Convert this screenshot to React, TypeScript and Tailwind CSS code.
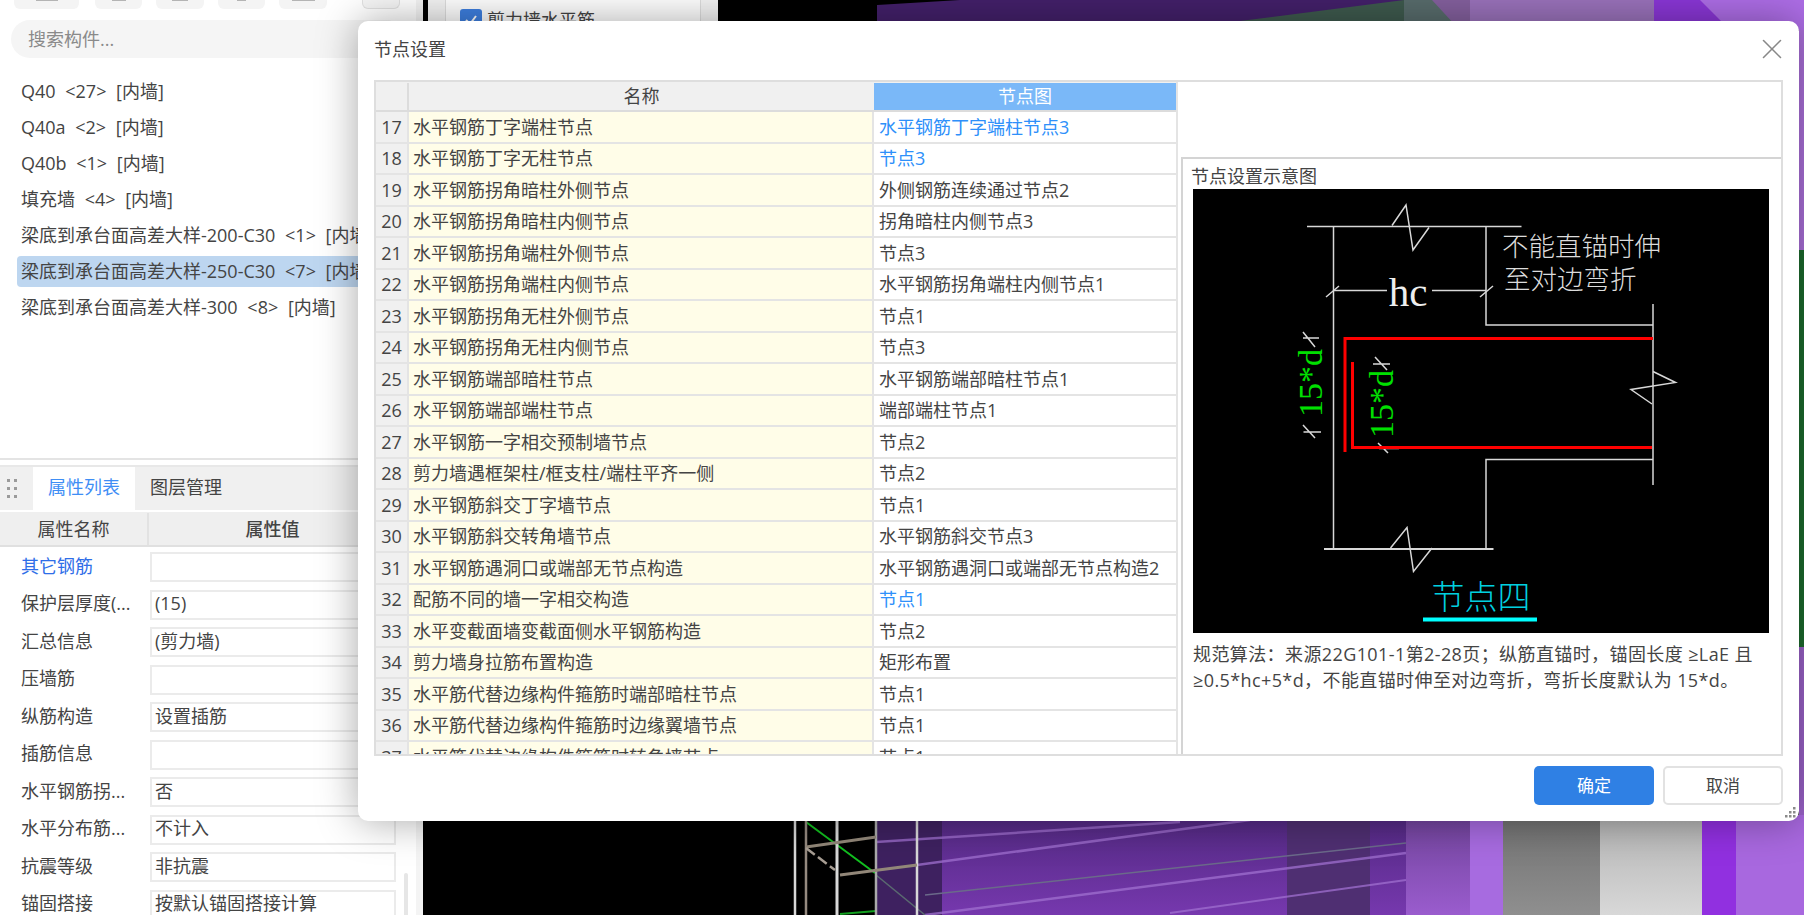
import { X } from "lucide-react";

const listItems = [
  "Q40 <27> [内墙]",
  "Q40a <2> [内墙]",
  "Q40b <1> [内墙]",
  "填充墙 <4> [内墙]",
  "梁底到承台面高差大样-200-C30 <1> [内墙]",
  "梁底到承台面高差大样-250-C30 <7> [内墙]",
  "梁底到承台面高差大样-300 <8> [内墙]",
];

const props: [string, string][] = [
  ["其它钢筋", ""],
  ["保护层厚度(...", "(15)"],
  ["汇总信息", "(剪力墙)"],
  ["压墙筋", ""],
  ["纵筋构造", "设置插筋"],
  ["插筋信息", ""],
  ["水平钢筋拐...", "否"],
  ["水平分布筋...", "不计入"],
  ["抗震等级", "非抗震"],
  ["锚固搭接", "按默认锚固搭接计算"],
];

// no, name, node, node is a link
const rows: [number, string, string, boolean?][] = [
  [17, "水平钢筋丁字端柱节点", "水平钢筋丁字端柱节点3", true],
  [18, "水平钢筋丁字无柱节点", "节点3", true],
  [19, "水平钢筋拐角暗柱外侧节点", "外侧钢筋连续通过节点2"],
  [20, "水平钢筋拐角暗柱内侧节点", "拐角暗柱内侧节点3"],
  [21, "水平钢筋拐角端柱外侧节点", "节点3"],
  [22, "水平钢筋拐角端柱内侧节点", "水平钢筋拐角端柱内侧节点1"],
  [23, "水平钢筋拐角无柱外侧节点", "节点1"],
  [24, "水平钢筋拐角无柱内侧节点", "节点3"],
  [25, "水平钢筋端部暗柱节点", "水平钢筋端部暗柱节点1"],
  [26, "水平钢筋端部端柱节点", "端部端柱节点1"],
  [27, "水平钢筋一字相交预制墙节点", "节点2"],
  [28, "剪力墙遇框架柱/框支柱/端柱平齐一侧", "节点2"],
  [29, "水平钢筋斜交丁字墙节点", "节点1"],
  [30, "水平钢筋斜交转角墙节点", "水平钢筋斜交节点3"],
  [31, "水平钢筋遇洞口或端部无节点构造", "水平钢筋遇洞口或端部无节点构造2"],
  [32, "配筋不同的墙一字相交构造", "节点1", true],
  [33, "水平变截面墙变截面侧水平钢筋构造", "节点2"],
  [34, "剪力墙身拉筋布置构造", "矩形布置"],
  [35, "水平筋代替边缘构件箍筋时端部暗柱节点", "节点1"],
  [36, "水平筋代替边缘构件箍筋时边缘翼墙节点", "节点1"],
  [37, "水平筋代替边缘构件箍筋时转角墙节点", "节点1"],
];

function Scene() {
  return (
    <svg className="block h-[915px] w-[1381px]" viewBox="423 0 1381 915">
      <defs>
        <linearGradient id="pur" x1="0" y1="822" x2="0" y2="915" gradientUnits="userSpaceOnUse">
          <stop offset="0" stopColor="#552a85" />
          <stop offset="1" stopColor="#7638ae" />
        </linearGradient>
        <linearGradient id="pur2" x1="0" y1="822" x2="0" y2="915" gradientUnits="userSpaceOnUse">
          <stop offset="0" stopColor="#74459f" />
          <stop offset="1" stopColor="#9a5cce" />
        </linearGradient>
        <linearGradient id="grey1" x1="0" y1="822" x2="0" y2="915" gradientUnits="userSpaceOnUse">
          <stop offset="0" stopColor="#737373" />
          <stop offset="1" stopColor="#8f8f8f" />
        </linearGradient>
        <linearGradient id="grey2" x1="0" y1="822" x2="0" y2="915" gradientUnits="userSpaceOnUse">
          <stop offset="0" stopColor="#b5b5b5" />
          <stop offset="1" stopColor="#d8d8d8" />
        </linearGradient>
      </defs>
      <rect x="423" y="0" width="1381" height="915" fill="#000" />
      {/* top strip above the dialog */}
      <path d="M877 5 L960 0 L1404 0 L1404 30 L877 30 Z" fill="#43206a" />
      <path d="M1240 21 L1404 0 L1430 25 L1240 25 Z" fill="#3e5a4e" />
      <rect x="1404" y="0" width="66" height="30" fill="#84609e" />
      <path d="M1404 0 L1432 0 L1455 25 L1404 25 Z" fill="#4d6f5f" opacity="0.8" />
      <rect x="1470" y="0" width="184" height="30" fill="#9a72bb" />
      <rect x="1654" y="0" width="150" height="30" fill="#8a36d6" />
      <path d="M1700 0 L1804 0 L1804 30 L1730 30 Z" fill="#ad6de6" />
      {/* right edge */}
      <rect x="1799" y="30" width="5" height="220" fill="#ab70da" />
      <rect x="1799" y="250" width="5" height="397" fill="#1d6b2e" />
      <rect x="1799" y="647" width="5" height="180" fill="#9a62c8" />
      {/* bands below the dialog */}
      <rect x="876" y="815" width="66" height="100" fill="#3e2160" />
      <rect x="942" y="815" width="345" height="100" fill="url(#pur)" />
      <rect x="1287" y="815" width="83" height="100" fill="#4f2f72" />
      <rect x="1370" y="815" width="36" height="100" fill="url(#pur)" />
      <rect x="1406" y="815" width="64" height="100" fill="url(#pur2)" />
      <rect x="1470" y="815" width="33" height="100" fill="#a76be0" />
      <rect x="1503" y="815" width="97" height="100" fill="url(#grey1)" />
      <rect x="1600" y="815" width="102" height="100" fill="url(#grey2)" />
      <rect x="1702" y="815" width="34" height="100" fill="#9130e0" />
      <rect x="1736" y="815" width="68" height="100" fill="#a868df" />
      {/* faint beams on the purple */}
      <g stroke="#a070d0" strokeWidth="2.5" opacity="0.75" fill="none">
        <path d="M876 842 L1180 822" />
        <path d="M917 865 L1250 820" />
        <path d="M925 915 L1406 853" />
        <path d="M1170 913 L1406 880" strokeWidth="2" />
      </g>
      <path d="M925 895 L1406 843" stroke="#6b6a8a" strokeWidth="1.5" fill="none" />
      {/* scaffold */}
      <path d="M806 822 L875 873" stroke="#12c020" strokeWidth="2" fill="none" />
      <path d="M840 914 L876 911" stroke="#12a020" strokeWidth="2" fill="none" />
      <path d="M876 875 L925 915" stroke="#5a6a70" strokeWidth="1.5" fill="none" />
      <g stroke="#d8d8d8" strokeWidth="2.5" fill="none">
        <path d="M795 815 V915" />
        <path d="M837 815 V915" strokeWidth="3" />
        <path d="M876 815 V915" stroke="#aaa" />
        <path d="M917 815 V915" />
      </g>
      <path d="M806 815 V915" stroke="#958a80" strokeWidth="2.5" fill="none" />
      <g stroke="#928779" strokeWidth="3" fill="none">
        <path d="M806 847 L876 837" />
        <path d="M840 875 L917 865" />
      </g>
      <path d="M806 848 L835 870" stroke="#a89e94" strokeWidth="2.5" strokeDasharray="11 4" fill="none" />
    </svg>
  );
}

function NodeDiagram() {
  return (
    <svg className="block h-[444px] w-[576px] bg-black" viewBox="0 0 576 444">
      <g stroke="#d8d8d8" strokeWidth="1.5" fill="none">
        <path d="M114 37.5 H328.5" />
        <path d="M140.5 37 V360" />
        <path d="M293 37 V136 H460" />
        <path d="M460 115 V296" />
        <path d="M293 360 V270.5 H460" />
        <path d="M131 360 H300.5" strokeWidth="2" />
        <path d="M199 36.5 L213 16 L220 61 L236 38.5" />
        <path d="M197.5 359 L214 338.5 L220.5 382.5 L239 359" />
        <path d="M460 182.5 L482.5 193.5 L438 200.5 L459 215" />
        <path d="M140 101.5 H194 M239 101.5 H293" />
        <path d="M133 108 L146 97 M287 108 L300 97" />
        <path d="M110 143 L122 158 M110 149 H126" />
        <path d="M110 236 L122 249 M110.5 243 H128" />
        <path d="M182 168 L194 181 M180 175 H197" />
        <path d="M185 254 L195 264 M186 259.5 H206" />
      </g>
      <path d="M460 149.5 H152 V263" stroke="#f00" strokeWidth="3" fill="none" />
      <path d="M159.5 173 V258.5 H459" stroke="#f00" strokeWidth="3" fill="none" />
      <text x="215" y="117" fill="#eee" fontSize="41" textAnchor="middle" fontFamily="'Liberation Serif', serif">
        hc
      </text>
      <g fill="#dcdcdc" fontSize="26.5" fontFamily="'Noto Sans CJK SC', sans-serif" fontWeight="300">
        <text x="309" y="67">不能直锚时伸</text>
        <text x="311" y="100">至对边弯折</text>
      </g>
      <g fill="#00e000" fontSize="34" fontFamily="'Liberation Serif', serif" textAnchor="middle">
        <text transform="translate(129 194) rotate(-90)">15*d</text>
        <text transform="translate(200 215) rotate(-90)">15*d</text>
      </g>
      <text
        x="288"
        y="420"
        fill="#00d0e0"
        fontSize="33"
        textAnchor="middle"
        fontFamily="'Noto Sans CJK SC', sans-serif"
        fontWeight="300"
      >
        节点四
      </text>
      <rect x="230" y="428.5" width="114" height="4" fill="#0ff" />
    </svg>
  );
}

function ToolButton({ className, mark }: { className: string; mark: string }) {
  return (
    <div className={`h-[9px] rounded-b-md bg-[#f4f4f4] ${className}`}>
      <div className={`mx-auto h-px ${mark} bg-[#b4b4b4]`} />
    </div>
  );
}

function Sidebar() {
  return (
    <aside className="flex h-[915px] w-[423px] shrink-0 flex-col border-r-[7px] border-[#f4f4f4] bg-white">
      <div className="flex h-5 items-start pl-[14px]">
        <ToolButton className="w-[66px] border-r border-white" mark="w-[22px]" />
        <ToolButton className="ml-[15px] w-[47px]" mark="w-[14px]" />
        <ToolButton className="ml-[14px] w-[48px]" mark="w-[16px]" />
        <ToolButton className="ml-[14px] w-[47px]" mark="w-[9px]" />
        <ToolButton className="ml-[14px] w-[48px]" mark="w-[23px]" />
        <div className="ml-[35px] h-[9px] w-[38px] rounded-b-md border border-t-0 border-[#e2e2e2] bg-[#f6f6f6]" />
      </div>
      <div className="mx-[11px] flex h-[38px] items-center rounded-full bg-[#f5f5f5] pl-[17px] text-[#8a8a8a]">
        搜索构件...
      </div>
      <div className="mt-[18px] flex flex-1 flex-col gap-[5px]">
        {listItems.map((item, i) => (
          <div
            key={item}
            className={`mx-[17px] flex h-[31px] items-center overflow-hidden whitespace-nowrap rounded px-1 pb-[1px] [word-spacing:5px] ${
              i === 5 ? "bg-[#bdd6f0]" : ""
            }`}
          >
            {item}
          </div>
        ))}
      </div>
      <div className="h-[457px] border-t-2 border-[#e4e4e4]">
        <div className="mt-[5px] flex h-[45px] items-stretch border-t-2 border-[#e8e8e8] bg-[#f0f0f0]">
          <div className="flex w-[33px] items-center pl-[7px]">
            <svg width="10" height="20" viewBox="0 0 10 20" fill="#9a9a9a">
              <rect x="0" y="0" width="3" height="3" />
              <rect x="7" y="0" width="3" height="3" />
              <rect x="0" y="8" width="3" height="3" />
              <rect x="7" y="8" width="3" height="3" />
              <rect x="0" y="16" width="3" height="3" />
              <rect x="7" y="16" width="3" height="3" />
            </svg>
          </div>
          <div className="flex w-[102px] items-center justify-center bg-white pb-[2px] text-[#3f8ef5]">属性列表</div>
          <div className="flex w-[102px] items-center justify-center pb-[2px]">图层管理</div>
        </div>
        <div className="mt-[2px] flex h-[35px] border-b-2 border-[#e0e0e0] bg-[#efefef] pt-[1px]">
          <div className="flex w-[149px] items-center justify-center border-r-2 border-[#e2e2e2]">属性名称</div>
          <div className="flex w-[247px] items-center justify-center font-medium">属性值</div>
        </div>
        <div className="relative mt-[5px] flex flex-col gap-[7.5px]">
          {props.map(([label, value], i) => (
            <div key={label} className="flex h-[30px] items-center">
              <div className={`w-[150px] pb-[2px] pl-[21px] ${i === 0 ? "text-[#2f6ee8]" : ""}`}>{label}</div>
              <div className="flex h-full w-[246px] items-center border-2 border-[#ebebeb] pb-[2px] pl-[3px]">
                {value}
              </div>
            </div>
          ))}
          <div className="absolute left-[404px] top-[321px] h-[60px] w-1 rounded bg-[#e6e6e6]" />
        </div>
      </div>
    </aside>
  );
}

function NodeDialog() {
  return (
    <div className="absolute left-[358px] top-[21px] flex h-[800px] w-[1441px] flex-col rounded-[10px] bg-white shadow-[0_0_40px_rgba(0,0,0,0.35)]">
      <div className="flex h-[59px] shrink-0 items-center justify-between pl-4 pr-[10px] pb-[3px]">
        <span>节点设置</span>
        <X size={34} strokeWidth={1.1} className="text-[#888]" />
      </div>
      <div className="mx-4 flex h-[676px] overflow-hidden border-2 border-[#dedede]">
        <div className="w-[802px] shrink-0 overflow-hidden border-r-2 border-[#e4e4e4]">
          <div className="flex h-[30px] border-b-2 border-[#dcdcdc] bg-[#f0f0f0] pt-[1px]">
            <div className="w-[33px] border-r-2 border-[#dcdcdc]" />
            <div className="flex w-[465px] items-center justify-center">名称</div>
            <div className="flex flex-1 items-center justify-center bg-[#7ab8f8] text-white">节点图</div>
          </div>
          {rows.map(([no, name, node, link]) => (
            <div key={no} className="flex h-[31.5px] border-b-2 border-[#e4e4e4]">
              <div className="flex w-[33px] items-center justify-center border-r-2 border-[#e4e4e4] bg-[#f0f0f0] pt-[1px]">
                {no}
              </div>
              <div className="flex w-[465px] items-center border-r-2 border-[#e4e4e4] bg-[#fffde8] pl-[4px] pt-[1px]">
                {name}
              </div>
              <div className={`flex flex-1 items-center pl-[5px] pt-[1px] ${link ? "text-[#2e90fa]" : ""}`}>{node}</div>
            </div>
          ))}
        </div>
        <div className="flex flex-1 flex-col pl-[3px] pt-[75px]">
          <div className="flex h-full flex-col border-l-2 border-t-2 border-[#d4d4d4] pl-[10px]">
            <div className="-ml-[2px] flex h-[30px] items-center pt-[4px]">节点设置示意图</div>
            <NodeDiagram />
            <p className="mt-[8px] w-[576px] leading-[26px] tracking-[0.4px]">
              规范算法：来源22G101-1第2-28页；纵筋直锚时，锚固长度 ≥LaE 且 ≥0.5*hc+5*d，不能直锚时伸至对边弯折，弯折长度默认为 15*d。
            </p>
          </div>
        </div>
      </div>
      <div className="flex flex-1 items-center justify-end gap-[9px] pr-4 pb-[6px]">
        <button className="h-[39px] w-[120px] rounded-[5px] bg-[#2f80e4] text-[17px] text-white">确定</button>
        <button className="h-[39px] w-[120px] rounded-[5px] border-2 border-[#e2e2e2] text-[17px]">取消</button>
      </div>
      <svg className="absolute bottom-[3px] right-[2px]" width="12" height="12" viewBox="0 0 12 12" fill="#8a8a8a">
        <rect x="8" y="1" width="2.5" height="2.5" />
        <rect x="4" y="5" width="2.5" height="2.5" />
        <rect x="8" y="5" width="2.5" height="2.5" />
        <rect x="0" y="9" width="2.5" height="2.5" />
        <rect x="4" y="9" width="2.5" height="2.5" />
        <rect x="8" y="9" width="2.5" height="2.5" />
      </svg>
    </div>
  );
}

export default function App() {
  return (
    <div className="relative flex h-[915px] w-[1804px] overflow-hidden bg-black text-[18px] leading-normal text-[#444] [font-family:'Open_Sans','Noto_Sans_CJK_SC',sans-serif]">
      <Sidebar />
      <div className="relative flex-1">
        <Scene />
        <div className="absolute left-[5px] top-0 h-[40px] w-[290px] bg-[#f4f4f4] px-[17px]">
          <div className="flex h-full items-start gap-[5px] border-x border-[#dedede] bg-white pl-[14px] pt-[9px]">
            <span className="flex h-[22px] w-[22px] items-center justify-center rounded-[3px] bg-[#3d7fe0]">
              <svg width="16" height="16" viewBox="0 0 16 16" fill="none" stroke="#fff" strokeWidth="2">
                <path d="M3 8 L7 12 L13 4" />
              </svg>
            </span>
            <span className="leading-[22px]">剪力墙水平筋</span>
          </div>
        </div>
      </div>
      <NodeDialog />
    </div>
  );
}
